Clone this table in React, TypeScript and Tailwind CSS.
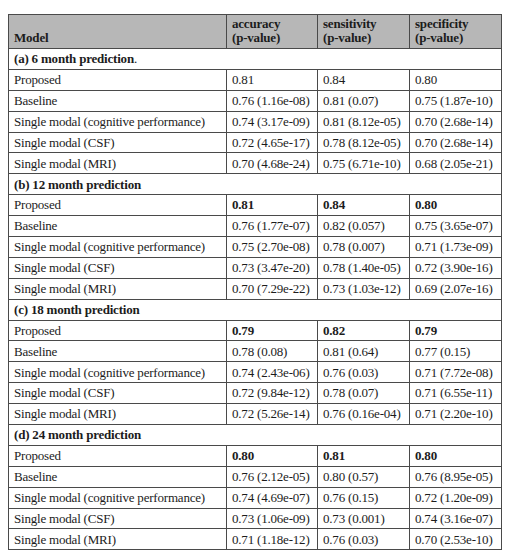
interface Section {
  title: string;
  suffix?: string;
  bold: boolean;
  rows: string[][];
}

const sections: Section[] = [
  {
    title: "(a) 6 month prediction",
    suffix: ".",
    bold: false,
    rows: [
      ["Proposed", "0.81", "0.84", "0.80"],
      ["Baseline", "0.76 (1.16e-08)", "0.81 (0.07)", "0.75 (1.87e-10)"],
      ["Single modal (cognitive performance)", "0.74 (3.17e-09)", "0.81 (8.12e-05)", "0.70 (2.68e-14)"],
      ["Single modal (CSF)", "0.72 (4.65e-17)", "0.78 (8.12e-05)", "0.70 (2.68e-14)"],
      ["Single modal (MRI)", "0.70 (4.68e-24)", "0.75 (6.71e-10)", "0.68 (2.05e-21)"],
    ],
  },
  {
    title: "(b) 12 month prediction",
    bold: true,
    rows: [
      ["Proposed", "0.81", "0.84", "0.80"],
      ["Baseline", "0.76 (1.77e-07)", "0.82 (0.057)", "0.75 (3.65e-07)"],
      ["Single modal (cognitive performance)", "0.75 (2.70e-08)", "0.78 (0.007)", "0.71 (1.73e-09)"],
      ["Single modal (CSF)", "0.73 (3.47e-20)", "0.78 (1.40e-05)", "0.72 (3.90e-16)"],
      ["Single modal (MRI)", "0.70 (7.29e-22)", "0.73 (1.03e-12)", "0.69 (2.07e-16)"],
    ],
  },
  {
    title: "(c) 18 month prediction",
    bold: true,
    rows: [
      ["Proposed", "0.79", "0.82", "0.79"],
      ["Baseline", "0.78 (0.08)", "0.81 (0.64)", "0.77 (0.15)"],
      ["Single modal (cognitive performance)", "0.74 (2.43e-06)", "0.76 (0.03)", "0.71 (7.72e-08)"],
      ["Single modal (CSF)", "0.72 (9.84e-12)", "0.78 (0.07)", "0.71 (6.55e-11)"],
      ["Single modal (MRI)", "0.72 (5.26e-14)", "0.76 (0.16e-04)", "0.71 (2.20e-10)"],
    ],
  },
  {
    title: "(d) 24 month prediction",
    bold: true,
    rows: [
      ["Proposed", "0.80", "0.81", "0.80"],
      ["Baseline", "0.76 (2.12e-05)", "0.80 (0.57)", "0.76 (8.95e-05)"],
      ["Single modal (cognitive performance)", "0.74 (4.69e-07)", "0.76 (0.15)", "0.72 (1.20e-09)"],
      ["Single modal (CSF)", "0.73 (1.06e-09)", "0.73 (0.001)", "0.74 (3.16e-07)"],
      ["Single modal (MRI)", "0.71 (1.18e-12)", "0.76 (0.03)", "0.70 (2.53e-10)"],
    ],
  },
];

const border = "border border-[#4a4a4a] px-[5px] py-0";
const cell = `${border} align-middle`;
const head = `${border} text-left align-bottom pb-[4px]`;

export default function App() {
  return (
    <div className="min-h-[560px] w-[513px] bg-white pt-[14px] pl-[8px] font-['Liberation_Serif',serif] text-[13px] tracking-[-0.2px] text-[#1c1c1c]">
      <table className="w-[493px] table-fixed border-collapse border-[1.5px] border-[#4a4a4a]">
        <colgroup>
          <col className="w-[218px]" />
          <col className="w-[91px]" />
          <col className="w-[92px]" />
          <col className="w-[92px]" />
        </colgroup>
        <thead>
          <tr className="h-[34px] bg-[#b7b7b7] font-bold leading-[13.5px]">
            <th className={head}>Model</th>
            <th className={head}>
              accuracy
              <br />
              (p-value)
            </th>
            <th className={head}>
              sensitivity
              <br />
              (p-value)
            </th>
            <th className={head}>
              specificity
              <br />
              (p-value)
            </th>
          </tr>
        </thead>
        <tbody>
          {sections.map((s) => (
            <>
              <tr key={s.title} className="h-[20.9px]">
                <td colSpan={4} className={`${cell} font-bold`}>
                  {s.title}
                  {s.suffix && <span className="font-normal">{s.suffix}</span>}
                </td>
              </tr>
              {s.rows.map((r, i) => (
                <tr key={s.title + r[0]} className="h-[20.9px]">
                  {r.map((v, j) => (
                    <td
                      key={j}
                      className={`${cell} whitespace-nowrap ${
                        s.bold && i === 0 && j > 0 ? "font-bold" : ""
                      }`}
                    >
                      {v}
                    </td>
                  ))}
                </tr>
              ))}
            </>
          ))}
        </tbody>
      </table>
    </div>
  );
}
